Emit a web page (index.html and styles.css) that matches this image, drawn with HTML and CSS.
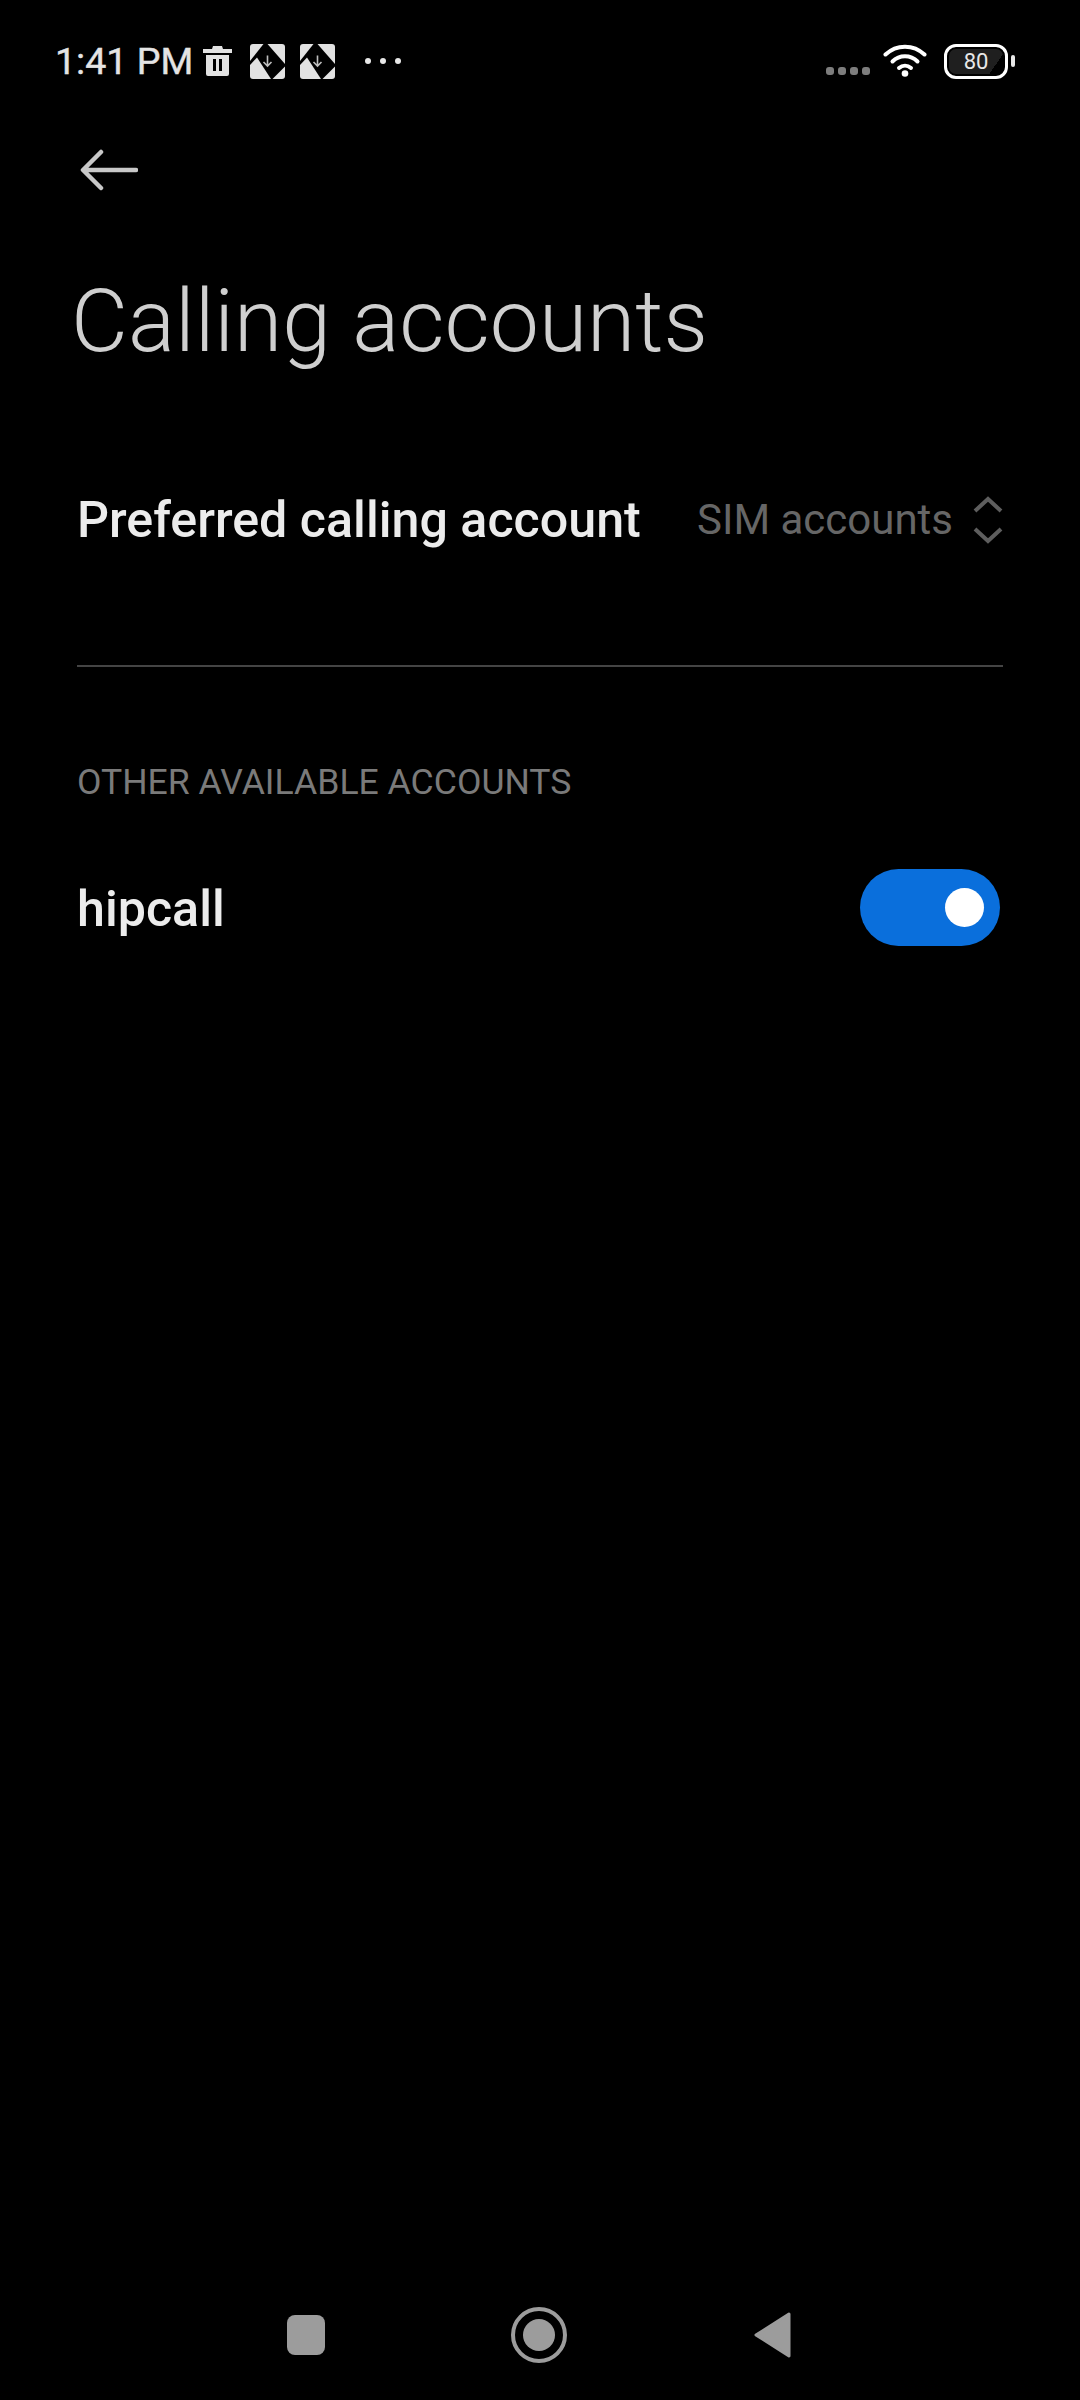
FILE: index.html
```html
<!DOCTYPE html>
<html lang="en">
<head>
<meta charset="utf-8">
<title>Calling accounts</title>
<link rel="stylesheet" href="styles.css">
</head>
<body>
<div class="page">
  <header class="status">
    <div class="status-left">
      <span class="time">1:41 PM</span>
      <svg class="ic-trash" viewBox="0 0 29 30"><path fill="#e2e2e2" fill-rule="evenodd" d="M10 0h9l1 3h9v4H0V3h9zM3 9h23v19a2 2 0 0 1-2 2H5a2 2 0 0 1-2-2zm7 4v12h3V13zm6 0v12h3V13z"/></svg>
      <svg class="ic-note" viewBox="0 0 35 35">
        <defs>
          <g id="note" fill="#e2e2e2">
            <path d="M3 0h10.500L0 17V3a3 3 0 0 1 3-3z"/>
            <path d="M17.500 0H32a3 3 0 0 1 3 3v17z"/>
            <path d="M35 22.500V32a3 3 0 0 1-3 3h-9.500z"/>
            <path d="M0 21l7-7.500L21 35H3a3 3 0 0 1-3-3z"/>
            <path d="M17.500 11.500v10M13.500 18l4 4 4-4" stroke="#bdbdbd" stroke-width="1.600" fill="none"/>
          </g>
        </defs>
        <use href="#note"/>
      </svg>
      <svg class="ic-note ic-note2" viewBox="0 0 35 35"><use href="#note"/></svg>
      <div class="more"><i></i><i></i><i></i></div>
    </div>
    <div class="status-right">
      <div class="signal"><i></i><i></i><i></i><i></i></div>
      <svg class="ic-wifi" viewBox="0 0 44 34"><g fill="none" stroke="#fff" stroke-width="4" stroke-linecap="round"><path d="M2.500 11.500C13.500 1 30.500 1 41.500 11.500"/><path d="M9.500 18.500C16.500 11.500 27.500 11.500 34.500 18.500"/><path d="M16 25c3.500-3 8.500-3 12 0"/></g><circle cx="22" cy="30.500" r="3.300" fill="#fff"/></svg>
      <div class="battery"><span class="batt-body">80</span><span class="batt-nub"></span></div>
    </div>
  </header>

  <div class="toolbar">
    <svg class="ic-back" viewBox="0 0 58 42"><path d="M56 21H4M21 3 3 21l18 18" fill="none" stroke="#c8c8c8" stroke-width="4.500" stroke-linecap="round" stroke-linejoin="round"/></svg>
  </div>

  <h1 class="title">Calling accounts</h1>

  <section class="pref-row">
    <span class="row-label">Preferred calling account</span>
    <div class="pref-value">
      <span class="value-text">SIM accounts</span>
      <svg class="ic-updown" viewBox="0 0 30 48"><path d="M2 15 15 3l13 12M2 33l13 12 13-12" fill="none" stroke="#5e5e5e" stroke-width="4"/></svg>
    </div>
  </section>

  <div class="divider"></div>

  <h2 class="section-head">OTHER AVAILABLE ACCOUNTS</h2>

  <section class="account-row">
    <span class="row-label">hipcall</span>
    <div class="toggle"><span class="knob"></span></div>
  </section>

  <nav class="navbar">
    <span class="nav-square"></span>
    <span class="nav-home"><span class="nav-dot"></span></span>
    <svg class="nav-back" viewBox="0 0 39 48"><path d="M36 3 3 24l33 21z" fill="#9c9c9c" stroke="#9c9c9c" stroke-width="3" stroke-linejoin="round"/></svg>
  </nav>
</div>
</body>
</html>
```

FILE: styles.css
```css
* { box-sizing: border-box; }
html, body { margin: 0; padding: 0; background: #000; }
body { font-family: Roboto, "Liberation Sans", sans-serif; color: #fff; }

.page {
  width: 1080px;
  height: 2400px;
  display: flex;
  flex-direction: column;
  background: #000;
  overflow: hidden;
}

.status {
  height: 120px;
  padding: 43px 65px 0 55px;
  display: flex;
  justify-content: space-between;
  align-items: flex-start;
  flex: none;
}
.status-left { display: flex; align-items: center; height: 36px; }
.status-right { display: flex; align-items: center; height: 36px; }
.time { font-size: 37.6px; line-height: 36px; color: #e4e4e4; width: 148px; white-space: nowrap; -webkit-text-stroke: 0.4px #e4e4e4; }
.ic-trash { width: 29px; height: 30px; margin-right: 18px; }
.ic-note { width: 35px; height: 35px; }
.ic-note2 { margin-left: 15px; }
.more { display: flex; gap: 9px; margin-left: 30px; }
.more i { width: 6px; height: 6px; border-radius: 50%; background: #e8e8e8; }

.signal { display: flex; gap: 4px; margin-top: 19px; margin-right: 13px; }
.signal i { width: 8px; height: 8px; border-radius: 3px; background: #7d7d7d; }
.ic-wifi { width: 44px; height: 34px; margin-right: 17px; margin-top: -2px; }
.battery { display: flex; align-items: center; gap: 3px; }
.batt-body {
  width: 64px;
  height: 35px;
  border: 3px solid #fff;
  border-radius: 12px;
  background: linear-gradient(125deg, #1f1f1f 78%, #000 78%);
  box-shadow: inset 0 0 0 2px #000;
  font-size: 22px;
  line-height: 29px;
  text-align: center;
  color: #e8e8e8;
}
.batt-nub { width: 4px; height: 12px; background: #e8e8e8; border-radius: 2px; }

.toolbar { height: 100px; padding: 29px 0 0 80px; flex: none; }
.ic-back { width: 58px; height: 42px; display: block; }

.title {
  margin: 51px 0 0;
  padding-left: 71px;
  font-size: 87.7px;
  font-weight: 300;
  line-height: 100px;
  color: #cfcfcf;
  flex: none;
}

.pref-row {
  margin-top: 88.5px;
  padding: 0 77px 0 77px;
  height: 120px;
  display: flex;
  justify-content: space-between;
  align-items: center;
  flex: none;
}
.row-label { font-size: 50.2px; font-weight: 500; color: #ececec; line-height: 60px; }
.pref-value { display: flex; align-items: center; gap: 20px; }
.value-text { font-size: 42px; color: #666; line-height: 50px; }
.ic-updown { width: 30px; height: 48px; }

.divider { margin: 85.5px 77px 0 77px; height: 2px; background: #444; flex: none; }

.section-head {
  margin: 89.5px 0 0;
  padding-left: 77px;
  font-size: 35.6px;
  font-weight: 400;
  line-height: 50px;
  color: #7a7a7a;
  flex: none;
}

.account-row {
  margin-top: 62.5px;
  padding: 0 80px 0 77px;
  height: 80px;
  display: flex;
  justify-content: space-between;
  align-items: center;
  flex: none;
}
.toggle {
  width: 140px;
  height: 77px;
  margin-bottom: 4px;
  border-radius: 39px;
  background: #0a6fdc;
  display: flex;
  align-items: center;
  justify-content: flex-end;
  padding-right: 16px;
}
.knob { width: 39px; height: 39px; border-radius: 50%; background: #fff; }

.navbar {
  margin-top: auto;
  height: 85px;
  padding: 0 288px 45px 287px;
  display: flex;
  align-items: center;
  justify-content: space-between;
  flex: none;
}
.nav-square { width: 38px; height: 40px; border-radius: 8px; background: #9c9c9c; }
.nav-home {
  width: 56px;
  height: 56px;
  border-radius: 50%;
  border: 4px solid #9c9c9c;
  display: flex;
  align-items: center;
  justify-content: center;
}
.nav-dot { width: 32px; height: 32px; border-radius: 50%; background: #9c9c9c; }
.nav-back { width: 39px; height: 48px; }
```
